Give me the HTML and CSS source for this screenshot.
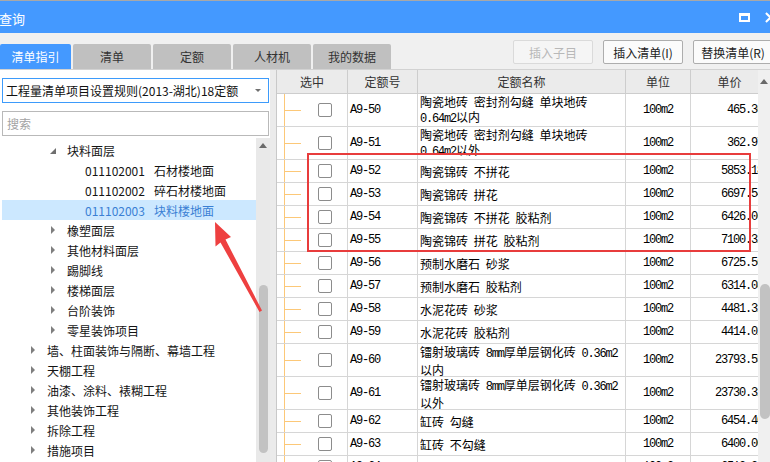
FILE: index.html
```html
<!DOCTYPE html>
<html lang="zh">
<head>
<meta charset="utf-8">
<title>查询</title>
<link rel="stylesheet" href="styles.css">
</head>
<body>
<div class="window">
  <header class="titlebar">
    <span class="title">查询</span>
    <div class="winctl">
      <span class="maxbtn"></span>
      <svg class="closebtn" viewBox="0 0 12 12"><path d="M1 1 L11 11 M11 1 L1 11" stroke="#fff" stroke-width="2.2" fill="none"/></svg>
    </div>
  </header>

  <div class="toolbar">
    <nav class="tabs">
      <span class="tab active">清单指引</span>
      <span class="tab">清单</span>
      <span class="tab">定额</span>
      <span class="tab">人材机</span>
      <span class="tab">我的数据</span>
    </nav>
    <div class="actions">
      <button class="btn" disabled>插入子目</button>
      <button class="btn">插入清单(I)</button>
      <button class="btn">替换清单(R)</button>
    </div>
  </div>

  <div class="main">
    <aside class="left">
      <div class="select"><span>工程量清单项目设置规则(2013-湖北)18定额</span><i class="caret"></i></div>
      <div class="search">搜索</div>
      <div class="tree-wrap">
        <ul class="tree">
          <li class="node l2"><i class="tw open"></i>块料面层</li>
          <li class="node l3"><span class="code">011102001</span>石材楼地面</li>
          <li class="node l3"><span class="code">011102002</span>碎石材楼地面</li>
          <li class="node l3 sel"><span class="code">011102003</span>块料楼地面</li>
          <li class="node l2"><i class="tw"></i>橡塑面层</li>
          <li class="node l2"><i class="tw"></i>其他材料面层</li>
          <li class="node l2"><i class="tw"></i>踢脚线</li>
          <li class="node l2"><i class="tw"></i>楼梯面层</li>
          <li class="node l2"><i class="tw"></i>台阶装饰</li>
          <li class="node l2"><i class="tw"></i>零星装饰项目</li>
          <li class="node l1"><i class="tw"></i>墙、柱面装饰与隔断、幕墙工程</li>
          <li class="node l1"><i class="tw"></i>天棚工程</li>
          <li class="node l1"><i class="tw"></i>油漆、涂料、裱糊工程</li>
          <li class="node l1"><i class="tw"></i>其他装饰工程</li>
          <li class="node l1"><i class="tw"></i>拆除工程</li>
          <li class="node l1"><i class="tw"></i>措施项目</li>
        </ul>
        <div class="sbar sbar-left"><i class="up"></i><span class="thumb"></span></div>
      </div>
    </aside>

    <section class="right">
      <div class="viewport">
        <div class="row head">
          <div class="c">选中</div><div class="c">定额号</div><div class="c">定额名称</div><div class="c">单位</div><div class="c">单价</div>
        </div>
        <div class="row tall">
          <div class="c sel-c"><i class="cb"></i></div><div class="c no">A9-50</div>
          <div class="c name top">陶瓷地砖 密封剂勾缝 单块地砖<br><span class="lat">0.64m2</span>以内</div>
          <div class="c unit">100m2</div><div class="c price">465.36</div>
        </div>
        <div class="row tall">
          <div class="c sel-c"><i class="cb"></i></div><div class="c no">A9-51</div>
          <div class="c name top">陶瓷地砖 密封剂勾缝 单块地砖<br><span class="lat">0.64m2</span>以外</div>
          <div class="c unit">100m2</div><div class="c price">362.97</div>
        </div>
        <div class="row">
          <div class="c sel-c"><i class="cb"></i></div><div class="c no">A9-52</div>
          <div class="c name">陶瓷锦砖 不拼花</div><div class="c unit">100m2</div><div class="c price">5853.18</div>
        </div>
        <div class="row">
          <div class="c sel-c"><i class="cb"></i></div><div class="c no">A9-53</div>
          <div class="c name">陶瓷锦砖 拼花</div><div class="c unit">100m2</div><div class="c price">6697.54</div>
        </div>
        <div class="row">
          <div class="c sel-c"><i class="cb"></i></div><div class="c no">A9-54</div>
          <div class="c name">陶瓷锦砖 不拼花 胶粘剂</div><div class="c unit">100m2</div><div class="c price">6426.06</div>
        </div>
        <div class="row">
          <div class="c sel-c"><i class="cb"></i></div><div class="c no">A9-55</div>
          <div class="c name">陶瓷锦砖 拼花 胶粘剂</div><div class="c unit">100m2</div><div class="c price">7100.32</div>
        </div>
        <div class="row">
          <div class="c sel-c"><i class="cb"></i></div><div class="c no">A9-56</div>
          <div class="c name">预制水磨石 砂浆</div><div class="c unit">100m2</div><div class="c price">6725.56</div>
        </div>
        <div class="row">
          <div class="c sel-c"><i class="cb"></i></div><div class="c no">A9-57</div>
          <div class="c name">预制水磨石 胶粘剂</div><div class="c unit">100m2</div><div class="c price">6314.08</div>
        </div>
        <div class="row">
          <div class="c sel-c"><i class="cb"></i></div><div class="c no">A9-58</div>
          <div class="c name">水泥花砖 砂浆</div><div class="c unit">100m2</div><div class="c price">4481.31</div>
        </div>
        <div class="row">
          <div class="c sel-c"><i class="cb"></i></div><div class="c no">A9-59</div>
          <div class="c name">水泥花砖 胶粘剂</div><div class="c unit">100m2</div><div class="c price">4414.02</div>
        </div>
        <div class="row tall">
          <div class="c sel-c"><i class="cb"></i></div><div class="c no">A9-60</div>
          <div class="c name top">镭射玻璃砖 <span class="lat">8mm</span>厚单层钢化砖 <span class="lat">0.36m2</span><br>以内</div>
          <div class="c unit">100m2</div><div class="c price">23793.55</div>
        </div>
        <div class="row tall">
          <div class="c sel-c"><i class="cb"></i></div><div class="c no">A9-61</div>
          <div class="c name top">镭射玻璃砖 <span class="lat">8mm</span>厚单层钢化砖 <span class="lat">0.36m2</span><br>以外</div>
          <div class="c unit">100m2</div><div class="c price">23730.31</div>
        </div>
        <div class="row">
          <div class="c sel-c"><i class="cb"></i></div><div class="c no">A9-62</div>
          <div class="c name">缸砖 勾缝</div><div class="c unit">100m2</div><div class="c price">6454.40</div>
        </div>
        <div class="row">
          <div class="c sel-c"><i class="cb"></i></div><div class="c no">A9-63</div>
          <div class="c name">缸砖 不勾缝</div><div class="c unit">100m2</div><div class="c price">6400.00</div>
        </div>
        <div class="row">
          <div class="c sel-c"><i class="cb"></i></div><div class="c no">A9-64</div>
          <div class="c name">广场砖 拼图案</div><div class="c unit">100m2</div><div class="c price">6512.20</div>
        </div>
        <div class="mark"></div>
      </div>
      <div class="sbar sbar-right"><i class="up"></i><span class="thumb"></span></div>
    </section>
  </div>

  <svg class="arrow" viewBox="0 0 770 462" width="770" height="462">
    <polygon points="215,222 231,237 225.5,239.5 262,310.5 259.5,312 220.5,242.5 215.5,246.5" fill="#ee4040"/>
  </svg>
</div>
</body>
</html>
```

FILE: styles.css
```css
* { box-sizing: border-box; }
html, body { margin: 0; padding: 0; }
body {
  width: 770px; height: 462px; overflow: hidden;
  background: #f0f0f0;
  font-family: "Noto Sans CJK SC", "Noto Sans", sans-serif;
  font-size: 12px; color: #1e1e1e;
}
.window {
  position: relative; width: 770px; height: 462px;
  display: flex; flex-direction: column; overflow: hidden;
}

/* title bar */
.titlebar {
  height: 33px; flex-shrink: 0;
  border-top: 1px solid #a8a8a8;
  background: #4499ff; color: #fff;
  display: flex; align-items: center; justify-content: space-between;
}
.title { font-size: 13px; margin-left: -1px; padding-top: 3px; }
.winctl { display: flex; align-items: center; gap: 15px; margin-right: -6px; }
.maxbtn { width: 11px; height: 9px; border: 2px solid #fff; border-top-width: 3px; }
.closebtn { width: 11px; height: 11px; display: block; }

/* toolbar */
.toolbar {
  height: 37px; flex-shrink: 0;
  border-bottom: 1px solid #d2d2d2;
  display: flex; white-space: nowrap;
}
.tabs { display: flex; gap: 2px; align-self: flex-end; flex-shrink: 0; }
.tab {
  width: 78px; height: 25px; background: #c0c0c0; color: #333;
  border-radius: 2px 2px 0 0;
  display: flex; align-items: center; justify-content: center;
  font-size: 12px;
}
.tab.active { width: 71px; background: #4499ff; color: #fff; }
.actions { display: flex; gap: 10px; margin-left: 122px; margin-top: 7px; flex-shrink: 0; }
.btn {
  width: 80px; height: 24px; padding: 0;
  border: 1px solid #adadad; border-radius: 2px; background: #fbfbfb;
  font-family: inherit; font-size: 12px; color: #222;
}
.btn:disabled { border-color: #dadada; color: #b8b8b8; background: #f5f5f5; }

/* main */
.main { flex: 1; min-height: 0; display: flex; background: #ebebeb; }
.left {
  width: 270px; flex-shrink: 0; background: #fff;
  padding: 8px 0 0 2px;
  display: flex; flex-direction: column;
}
.select {
  width: 267px; height: 25px; border: 1px solid #3d9bfb; background: #fff;
  display: flex; align-items: center; justify-content: space-between;
  padding: 0 7px 0 3px; font-size: 12px; color: #111;
}
.caret { width: 0; height: 0; border-top: 3px solid #707070; border-left: 3px solid transparent; border-right: 3px solid transparent; }
.search {
  margin-top: 8px; width: 267px; height: 25px;
  border: 1px solid #b9b9b9; background: #fff; color: #a3a3a3;
  display: flex; align-items: center; padding-left: 4px;
}
.tree-wrap { margin-top: 2px; flex: 1; min-height: 0; display: flex; }
.tree { width: 254px; margin: 0; padding: 2px 0 0 0; list-style: none; }
.node { height: 20px; display: flex; align-items: center; white-space: nowrap; color: #141414; }
.node.l1 { padding-left: 27px; }
.node.l2 { padding-left: 47px; }
.node.l3 { padding-left: 83px; }
.node.sel { background: #cce8ff; color: #3a7fd4; }
.code { margin-right: 9px; }
.tw {
  width: 18px; height: 8px; display: flex; align-items: center; flex-shrink: 0;
}
.tw::before {
  content: ""; width: 0; height: 0;
  border-left: 4px solid #7f7f7f; border-top: 4px solid transparent; border-bottom: 4px solid transparent;
  margin-left: 2px;
}
.tw.open::before {
  border-left: 6px solid transparent; border-top: 0; border-bottom: 6px solid #6f6f6f;
  margin-left: 1px; margin-top: 1px;
}

/* scrollbars */
.sbar { flex-shrink: 0; display: flex; flex-direction: column; align-items: center; }
.sbar .up { width: 0; height: 0; border-bottom: 5px solid #6a6a6a; border-left: 4px solid transparent; border-right: 4px solid transparent; }
.sbar .thumb { background: #c2c2c2; border-radius: 5px; }
.sbar-left { width: 14px; background: #e9e9e9; }
.sbar-left .up { margin-top: 5px; }
.sbar-left .thumb { width: 9px; height: 168px; margin-top: 137px; }
.sbar-right { width: 12px; background: #f0f0f0; }
.sbar-right .up { margin-top: 9px; }
.sbar-right .thumb { width: 10px; height: 135px; margin-top: 200px; margin-left: 2px; }

/* right grid */
.right { flex: 1; min-width: 0; margin-left: 6px; border-left: 1px solid #c9c9c9; display: flex; background: #fff; }
.viewport { flex: 1; min-width: 0; overflow: hidden; position: relative; }
.row {
  display: grid; grid-template-columns: 71px 70px 208px 65px 78px;
  width: 492px; height: 23px;
}
.row.tall { height: 33px; }
.row.head { height: 24px; background: #ebebeb; color: #333; }
.c {
  border-right: 1px solid #d6d6d6; border-bottom: 1px solid #d6d6d6;
  display: flex; align-items: center; overflow: hidden; white-space: nowrap;
  color: #000;
}
.head .c { justify-content: center; color: #333; border-color: #cdcdcd; }
.sel-c {
  padding-left: 41px;
  background-image: linear-gradient(#fcc878, #fcc878), linear-gradient(#fcc878, #fcc878);
  background-repeat: no-repeat;
  background-size: 1px 100%, 17px 1px;
  background-position: 7px 0, 7px 50%;
}
.cb { width: 14px; height: 14px; border: 1px solid #8c8c8c; border-radius: 2px; background: #fff; }
.no, .unit, .price, .lat {
  font-family: "Liberation Mono", "DejaVu Sans Mono", monospace;
  font-size: 12px; letter-spacing: -1.2px;
}
.no { padding-left: 2px; }
.unit { justify-content: center; }
.price { justify-content: flex-end; padding-right: 5px; }
.name { padding-left: 2px; word-spacing: 3px; line-height: 15px; }
.name.top { display: block; padding-top: 0; white-space: nowrap; line-height: 15px; }
.name .lat { word-spacing: 0; }

.mark {
  position: absolute; left: 30px; top: 83px; width: 444px; height: 99px;
  border: 2px solid #e83c3c;
}

.arrow { position: absolute; left: 0; top: 0; pointer-events: none; }
```
